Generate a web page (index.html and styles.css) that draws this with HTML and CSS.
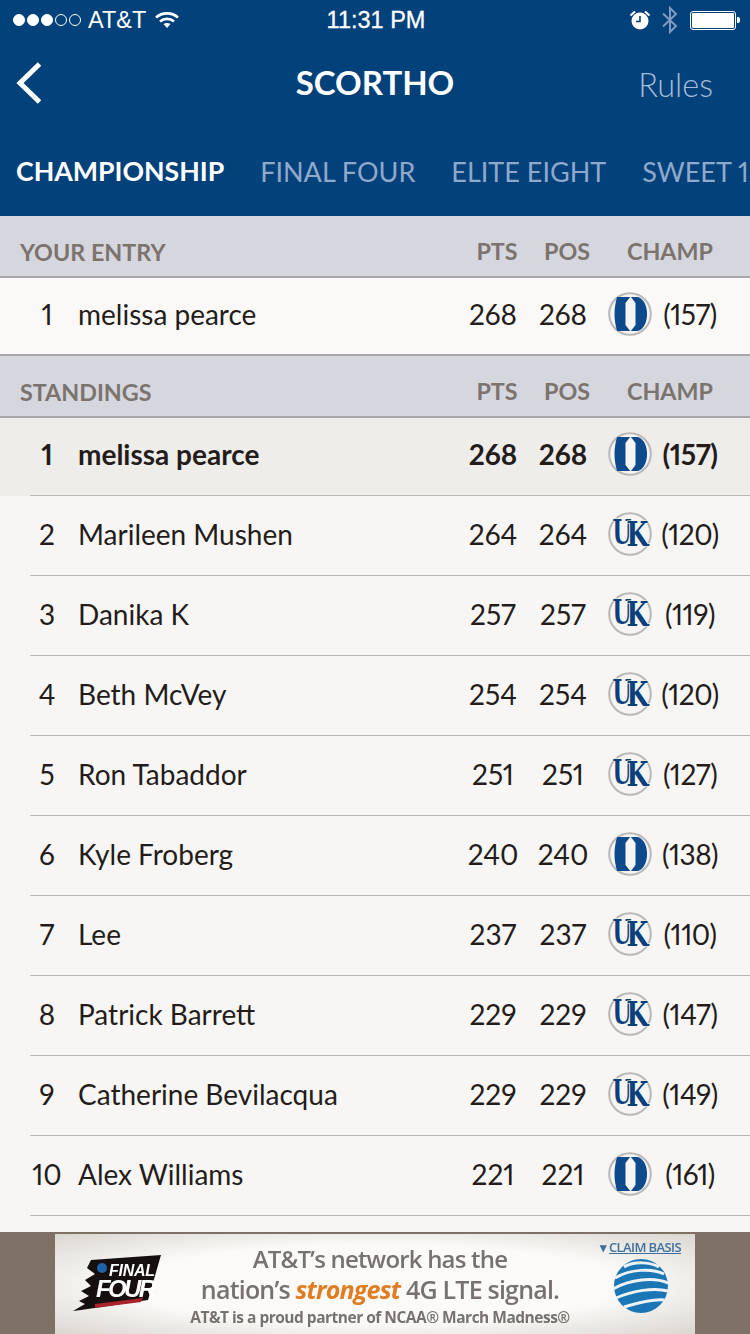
FILE: index.html
```html
<!DOCTYPE html>
<html lang="en">
<head>
<meta charset="utf-8">
<title>Scortho</title>
<link rel="stylesheet" href="styles.css">
</head>
<body>
<svg class="defs" width="0" height="0" aria-hidden="true">
  <symbol id="duke" viewBox="0 0 44 44">
    <circle cx="22" cy="22" r="20.800" fill="#f6f5f4" stroke="#b9b7b8" stroke-width="2"/>
    <path fill="#0d4a8c" d="M9 5H30C36 7 39 14 39 22S36 37 30 39H9C7.500 33 6.500 28 6.500 22S7.500 10 9 5Z"/>
    <path fill="#f6f5f4" d="M22.500 4.500L27.500 11V33L22.500 39.500L17.500 33V11Z"/>
  </symbol>
  <symbol id="uk" viewBox="0 0 44 44">
    <circle cx="22" cy="22" r="20.800" fill="#f6f5f4" stroke="#b9b7b8" stroke-width="2"/>
    <text class="uk-letter" x="4.500" y="32" textLength="19" lengthAdjust="spacingAndGlyphs">U</text>
    <text class="uk-letter" x="18.500" y="34" textLength="22" lengthAdjust="spacingAndGlyphs">K</text>
  </symbol>
</svg>

<header class="top">
  <div class="status">
    <div class="status-left">
      <span class="signal"><i class="on"></i><i class="on"></i><i class="on"></i><i></i><i></i></span>
      <span class="carrier">AT&amp;T</span>
      <svg class="wifi" width="24" height="18" viewBox="0 0 24 18"><path d="M1 6.500C7 1 17 1 23 6.500" /><path d="M5 10.500C9 7 15 7 19 10.500"/><path class="wifi-dot" d="M8.500 13C10.500 11.500 13.500 11.500 15.500 13L12 17Z"/></svg>
    </div>
    <div class="clock">11:31 PM</div>
    <div class="status-right">
      <svg width="22" height="22" viewBox="0 0 22 22"><circle cx="11" cy="12" r="8.500" fill="#fff"/><path d="M11 7V12.500H7" fill="none" stroke="#06407a" stroke-width="1.600"/><path d="M1.500 6.500L6 2.500M20.500 6.500L16 2.500" stroke="#fff" stroke-width="2.200"/></svg>
      <svg class="bt" width="18" height="28" viewBox="0 0 18 28"><path d="M2 7.500L15 20L9 26V2L15 8L2 20.500" fill="none" stroke="#7f9bc1" stroke-width="2"/></svg>
      <span class="battery"><span class="battery-fill"></span></span>
    </div>
  </div>
  <div class="navbar">
    <svg class="back" width="28" height="44" viewBox="0 0 28 44"><path d="M24.500 3L5 22L24.500 41" fill="none" stroke="#fff" stroke-width="5"/></svg>
    <h1>SCORTHO</h1>
    <span class="rules">Rules</span>
  </div>
  <nav class="tabs">
    <span class="tab active">CHAMPIONSHIP</span>
    <span class="tab">FINAL FOUR</span>
    <span class="tab">ELITE EIGHT</span>
    <span class="tab">SWEET 16</span>
  </nav>
</header>

<main>
  <div class="section"><span class="sec-title">YOUR ENTRY</span><span class="sec-col">PTS</span><span class="sec-col">POS</span><span class="sec-champ">CHAMP</span></div>
  <div class="entry">
    <div class="cells"><span class="rank">1</span><span class="name">melissa pearce</span><span class="num">268</span><span class="num">268</span><svg class="logo"><use href="#duke"/></svg><span class="score">(157)</span></div>
  </div>
  <div class="section sec2"><span class="sec-title">STANDINGS</span><span class="sec-col">PTS</span><span class="sec-col">POS</span><span class="sec-champ">CHAMP</span></div>
  <div class="list">
    <div class="row me"><div class="cells"><span class="rank">1</span><span class="name">melissa pearce</span><span class="num">268</span><span class="num">268</span><svg class="logo"><use href="#duke"/></svg><span class="score">(157)</span></div></div>
    <div class="row"><div class="cells"><span class="rank">2</span><span class="name">Marileen Mushen</span><span class="num">264</span><span class="num">264</span><svg class="logo"><use href="#uk"/></svg><span class="score">(120)</span></div></div>
    <div class="row"><div class="cells"><span class="rank">3</span><span class="name">Danika K</span><span class="num">257</span><span class="num">257</span><svg class="logo"><use href="#uk"/></svg><span class="score">(119)</span></div></div>
    <div class="row"><div class="cells"><span class="rank">4</span><span class="name">Beth McVey</span><span class="num">254</span><span class="num">254</span><svg class="logo"><use href="#uk"/></svg><span class="score">(120)</span></div></div>
    <div class="row"><div class="cells"><span class="rank">5</span><span class="name">Ron Tabaddor</span><span class="num">251</span><span class="num">251</span><svg class="logo"><use href="#uk"/></svg><span class="score">(127)</span></div></div>
    <div class="row"><div class="cells"><span class="rank">6</span><span class="name">Kyle Froberg</span><span class="num">240</span><span class="num">240</span><svg class="logo"><use href="#duke"/></svg><span class="score">(138)</span></div></div>
    <div class="row"><div class="cells"><span class="rank">7</span><span class="name">Lee</span><span class="num">237</span><span class="num">237</span><svg class="logo"><use href="#uk"/></svg><span class="score">(110)</span></div></div>
    <div class="row"><div class="cells"><span class="rank">8</span><span class="name">Patrick Barrett</span><span class="num">229</span><span class="num">229</span><svg class="logo"><use href="#uk"/></svg><span class="score">(147)</span></div></div>
    <div class="row"><div class="cells"><span class="rank">9</span><span class="name">Catherine Bevilacqua</span><span class="num">229</span><span class="num">229</span><svg class="logo"><use href="#uk"/></svg><span class="score">(149)</span></div></div>
    <div class="row"><div class="cells"><span class="rank">10</span><span class="name">Alex Williams</span><span class="num">221</span><span class="num">221</span><svg class="logo"><use href="#duke"/></svg><span class="score">(161)</span></div></div>
  </div>
</main>

<footer class="adbar">
  <div class="ad">
    <div class="ff">
      <svg width="92" height="60" viewBox="0 0 92 60"><path d="M20 6L90 1L77 46L10 56L2 57L14 50L8 47L18 42L10 37L20 32L14 26L24 20L16 14Z" fill="#15100f"/><path d="M24 50L72 44L70 48L24 54Z" fill="#a8232c"/><circle cx="31" cy="14" r="5" fill="#1f62a8"/><text class="ff-a" x="38" y="22" textLength="46">FINAL</text><text class="ff-b" x="25" y="43" textLength="60">FOUR</text></svg>
    </div>
    <div class="copy">
      <div class="l1">AT&amp;T’s network has the</div>
      <div class="l2">nation’s <em>strongest</em> 4G LTE signal.</div>
      <div class="l3">AT&amp;T is a proud partner of NCAA® March Madness®</div>
    </div>
    <div class="att">
      <div class="claim">▾ <u>CLAIM BASIS</u></div>
      <svg width="58" height="54" viewBox="0 0 58 54"><circle cx="29" cy="27" r="27" fill="#1b76b5"/><g fill="none" stroke="#eef2f5" stroke-width="3"><path d="M12 8C22 2 38 3 47 8"/><path d="M3 19C18 10 40 9 52 15"/><path d="M1 30C18 20 42 18 56 24"/><path d="M4 39C20 32 42 28 56 32"/><path d="M12 48C26 44 42 40 52 41"/></g></svg>
    </div>
  </div>
</footer>
</body>
</html>
```

FILE: styles.css
```css
* { box-sizing: border-box; }
html, body { margin: 0; padding: 0; }
body {
  width: 750px;
  height: 1334px;
  overflow: hidden;
  background: #f7f6f4;
  font-family: Lato, "Open Sans", sans-serif;
  font-variant-numeric: proportional-nums;
  color: #231c1a;
  display: flex;
  flex-direction: column;
}
.defs { position: absolute; }
.uk-letter {
  font-family: "DejaVu Serif", serif;
  font-weight: 700;
  font-size: 33px;
  fill: #0b3f7a;
  stroke: #f6f5f4;
  stroke-width: 1.200px;
  paint-order: stroke;
}

.top { height: 216px; background: #03417b; color: #fff; flex: none; overflow: hidden; }
.status {
  height: 40px;
  display: grid;
  grid-template-columns: 1fr auto 1fr;
  align-items: center;
  padding: 0 11px 0 13px;
  font-family: "Liberation Sans", sans-serif;
}
.status-left { display: flex; align-items: center; gap: 9px; }
.signal { display: flex; gap: 2px; }
.signal i { width: 12px; height: 12px; border-radius: 50%; border: 1px solid #fff; display: block; }
.signal i.on { background: #fff; }
.carrier { font-size: 23.500px; margin-left: -2px; }
.wifi path { fill: none; stroke: #fff; stroke-width: 2.600; }
.wifi .wifi-dot { fill: #fff; stroke: none; }
.clock { font-size: 23.500px; -webkit-text-stroke: 0.3px #fff; }
.status-right { display: flex; align-items: center; justify-content: flex-end; gap: 10px; padding-right: 3px; }
.bt { margin-right: 1px; }
.battery {
  width: 46px; height: 19px; border: 1.500px solid #fff; border-radius: 3px; padding: 1px; position: relative; display: block;
}
.battery::after { content: ""; position: absolute; right: -5px; top: 5px; width: 3px; height: 6px; background: #fff; border-radius: 0 2px 2px 0; }
.battery-fill { display: block; height: 100%; background: #fff; border-radius: 1px; }

.navbar {
  height: 88px;
  display: grid;
  grid-template-columns: 1fr auto 1fr;
  align-items: center;
  padding: 0 37px;
}
.navbar h1 { margin: 0; font-size: 33px; font-weight: 700; padding-bottom: 4px; }
.back { margin: 0 0 3px -22px; }
.rules { justify-self: end; font-size: 32.500px; font-weight: 300; color: #a5bcd8; }

.tabs { display: flex; gap: 36px; padding: 27px 0 0 16px; font-size: 27px; white-space: nowrap; color: #8fa9cc; }
.tab.active { color: #fff; font-weight: 700; font-size: 26.700px; }

.section {
  height: 62px;
  padding: 12px 0 0 20px;
  background: #d6d7de;
  border-bottom: 2px solid #aaa7aa;
  display: grid;
  grid-template-columns: 1fr 70px 70px 148px;
  align-items: center;
  font-size: 23.300px;
  font-weight: 700;
  color: #7b736e;
}
.sec2 { height: 64px; border-top: 2px solid #aaa7aa; }
.sec-col { text-align: center; margin-top: -2px; }
.sec-champ { padding-left: 25px; margin-top: -2px; }

.entry { height: 76px; background: #faf9f7; }
.row { height: 80px; }
.row .cells { height: 80px; padding-bottom: 4px; border-bottom: 1px solid #bdb8b4; }
.row.me { height: 78px; background: #efedea; }
.row.me .cells { height: 78px; padding-bottom: 5px; font-weight: 700; }
.cells {
  height: 76px;
  margin-left: 30px;
  padding-bottom: 4px;
  display: grid;
  grid-template-columns: 34px 1fr 70px 70px 54px 76px 22px;
  align-items: center;
  font-size: 28px;
}
.rank { text-align: center; }
.name { padding-left: 14px; }
.num { text-align: center; }
.logo { width: 44px; height: 44px; margin-left: 10px; }
.score { text-align: center; letter-spacing: -0.5px; }

main { flex: none; }
.adbar { margin-top: auto; height: 102px; background: #7e7064; padding: 2px 55px 0; flex: none; overflow: hidden; }
.ad {
  height: 100px;
  background: radial-gradient(ellipse at center, #fbfaf8 55%, #dad6d0 100%);
  display: grid;
  grid-template-columns: 140px 370px 130px;
  font-family: "Open Sans", sans-serif;
  color: #77726f;
  filter: blur(0.5px);
}
.ff { padding: 20px 0 0 16px; }
.ff-a { font: italic 700 16px "Liberation Sans", sans-serif; fill: #fff; }
.ff-b { font: italic 700 24px "Liberation Sans", sans-serif; fill: #fff; }
.copy { display: flex; flex-direction: column; align-items: center; white-space: nowrap; padding-top: 9px; min-width: 0; }
.l1 { font-size: 24px; line-height: 31px; font-weight: 600; letter-spacing: -0.8px; }
.l2 { font-size: 25px; line-height: 31px; font-weight: 600; letter-spacing: -0.8px; }
.l2 em { color: #e07d22; font-weight: 700; }
.l3 { font-size: 15.500px; line-height: 25px; font-weight: 700; letter-spacing: -0.5px; }
.att { padding: 4px 14px 0 0; display: flex; flex-direction: column; align-items: flex-end; }
.claim { font-size: 13px; color: #3e6f9d; letter-spacing: -0.6px; white-space: nowrap; font-weight: 600; }
.att svg { margin: 3px 0 0 36px; align-self: center; }
```
